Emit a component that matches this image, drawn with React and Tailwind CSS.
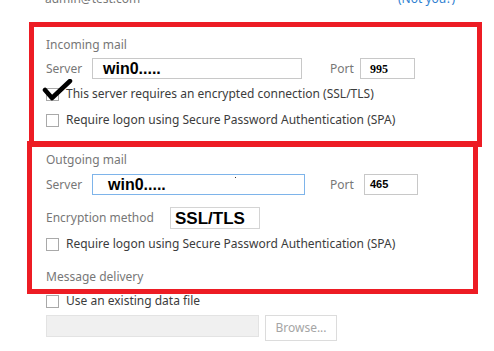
import React from 'react';

const FONT = { fontFamily: '"Segoe UI", "Noto Sans", "Open Sans", sans-serif' };

const Checkbox = ({ label, className = '' }) => (
  <div className={`flex h-[16px] items-center ${className}`}>
    <span className="h-[13px] w-[13px] shrink-0 border border-[#a9a9a9] bg-white" />
    <span className="ml-[7px] whitespace-nowrap text-[12px] leading-[16px] text-[#3c3c3c]">{label}</span>
  </div>
);

const SectionTitle = ({ children, className = '' }) => (
  <div className={`h-[16px] text-[12px] leading-[16px] text-[#777] ${className}`}>{children}</div>
);

const App = () => {
  return (
    <div className="relative h-[351px] w-[494px] overflow-hidden bg-white" style={FONT}>
      {/* account line, cut off at the top */}
      <div className="-mt-[9px] flex h-[16px] items-center justify-between pl-[45px] pr-[39px] text-[12px] leading-[16px]">
        <span className="text-[#777]">admin@test.com</span>
        <span className="text-[#2f7fd1]">(Not you?)</span>
      </div>

      <div className="flex flex-col pl-[46px]">
        <SectionTitle className="mt-[30px]">Incoming mail</SectionTitle>

        <div className="mt-[5px] flex h-[21px] items-center">
          <span className="w-[46px] text-[12px] text-[#777]">Server</span>
          <div className="flex h-[21px] w-[210px] items-center border border-[#c8c8c8] pl-[10px]">
            <span className="text-[16px] font-bold leading-none text-black" style={{ fontFamily: '"Liberation Sans", Arial, sans-serif' }}>
              win0.....
            </span>
          </div>
          <span className="ml-[28px] w-[30px] text-[12px] text-[#777]">Port</span>
          <div className="flex h-[21px] w-[55px] items-center border border-[#c8c8c8] pl-[9px]">
            <span className="text-[12px] font-bold leading-none text-black" style={{ fontFamily: '"Liberation Serif", "Times New Roman", serif' }}>
              995
            </span>
          </div>
        </div>

        <Checkbox className="mt-[7px]" label="This server requires an encrypted connection (SSL/TLS)" />
        <Checkbox className="mt-[10px]" label="Require logon using Secure Password Authentication (SPA)" />

        <SectionTitle className="mt-[24px]">Outgoing mail</SectionTitle>

        <div className="mt-[6px] flex h-[21px] items-center">
          <span className="w-[46px] text-[12px] text-[#777]">Server</span>
          <div className="relative flex h-[21px] w-[213px] items-center border border-[#7eb4ea] pl-[15px]">
            <span className="text-[16px] font-bold leading-none text-black" style={{ fontFamily: '"Liberation Sans", Arial, sans-serif' }}>
              win0.....
            </span>
            <span className="absolute left-[142px] top-[2px] h-[1px] w-[1px] bg-[#333]" />
          </div>
          <span className="ml-[25px] w-[34px] text-[12px] text-[#777]">Port</span>
          <div className="flex h-[21px] w-[54px] items-center border border-[#c8c8c8] pl-[5px]">
            <span className="text-[11px] font-bold leading-none text-black" style={{ fontFamily: '"Liberation Sans", Arial, sans-serif' }}>
              465
            </span>
          </div>
        </div>

        <div className="mt-[12px] flex h-[22px] items-center">
          <span className="w-[124px] whitespace-nowrap text-[12px] text-[#777]">Encryption method</span>
          <div className="flex h-[22px] w-[90px] items-center border border-[#d4d4d4] pl-[4px]">
            <span className="text-[17px] font-bold leading-none text-black" style={{ fontFamily: '"Liberation Sans", Arial, sans-serif' }}>
              SSL/TLS
            </span>
          </div>
        </div>

        <Checkbox className="mt-[7px]" label="Require logon using Secure Password Authentication (SPA)" />

        <SectionTitle className="mt-[17px]">Message delivery</SectionTitle>

        <Checkbox className="mt-[8px]" label="Use an existing data file" />

        <div className="mt-[6px] flex items-start">
          <div className="h-[22px] w-[213px] border border-[#e3e3e3] bg-[#f0f0f0]" />
          <div className="ml-[6px] flex h-[26px] w-[72px] items-center justify-center border border-[#dcdcdc] bg-white text-[12px] text-[#a5a5a5]">
            Browse...
          </div>
        </div>
      </div>

      {/* red annotation boxes */}
      <div className="pointer-events-none absolute left-[29px] top-[22px] h-[125px] w-[453px] border-[5px] border-[#ed1c24]" />
      <div className="pointer-events-none absolute left-[27px] top-[141px] h-[153px] w-[451px] border-[5px] border-[#ed1c24]" />

      {/* hand-drawn check mark */}
      <svg className="pointer-events-none absolute left-[42px] top-[79px]" width="31" height="22" viewBox="0 0 31 22">
        <path d="M3 11 L10 19 L28 2" fill="none" stroke="#000" strokeWidth="4.5" strokeLinecap="round" strokeLinejoin="round" />
      </svg>
    </div>
  );
};

export default App;
